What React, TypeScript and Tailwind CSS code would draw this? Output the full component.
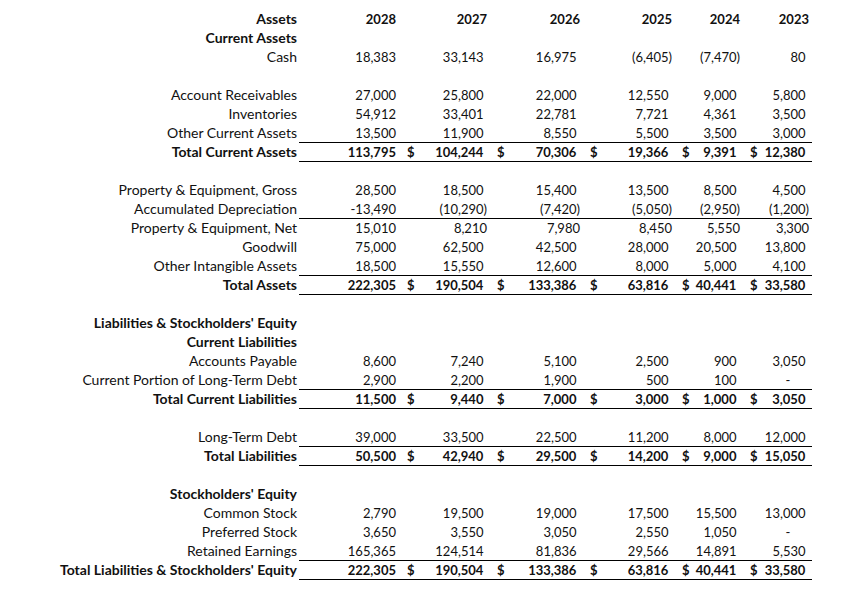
type Row = {
  label?: string;
  bold?: boolean;
  vals?: string[];
  dollar?: boolean;
  line?: boolean;
  general?: boolean;
};

const ROWS: Row[] = [
  { label: "Current Assets", bold: true },
  { label: "Cash", vals: ["18,383", "33,143", "16,975", "(6,405)", "(7,470)", "80"] },
  {},
  { label: "Account Receivables", vals: ["27,000", "25,800", "22,000", "12,550", "9,000", "5,800"] },
  { label: "Inventories", vals: ["54,912", "33,401", "22,781", "7,721", "4,361", "3,500"] },
  { label: "Other Current Assets", vals: ["13,500", "11,900", "8,550", "5,500", "3,500", "3,000"], line: true },
  { label: "Total Current Assets", bold: true, dollar: true, line: true, vals: ["113,795", "104,244", "70,306", "19,366", "9,391", "12,380"] },
  {},
  { label: "Property & Equipment, Gross", vals: ["28,500", "18,500", "15,400", "13,500", "8,500", "4,500"] },
  { label: "Accumulated Depreciation", line: true, vals: ["-13,490", "(10,290)", "(7,420)", "(5,050)", "(2,950)", "(1,200)"] },
  { label: "Property & Equipment, Net", general: true, vals: ["15,010", "8,210", "7,980", "8,450", "5,550", "3,300"] },
  { label: "Goodwill", vals: ["75,000", "62,500", "42,500", "28,000", "20,500", "13,800"] },
  { label: "Other Intangible Assets", line: true, vals: ["18,500", "15,550", "12,600", "8,000", "5,000", "4,100"] },
  { label: "Total Assets", bold: true, dollar: true, line: true, vals: ["222,305", "190,504", "133,386", "63,816", "40,441", "33,580"] },
  {},
  { label: "Liabilities & Stockholders' Equity", bold: true },
  { label: "Current Liabilities", bold: true },
  { label: "Accounts Payable", vals: ["8,600", "7,240", "5,100", "2,500", "900", "3,050"] },
  { label: "Current Portion of Long-Term Debt", line: true, vals: ["2,900", "2,200", "1,900", "500", "100", "-"] },
  { label: "Total Current Liabilities", bold: true, dollar: true, line: true, vals: ["11,500", "9,440", "7,000", "3,000", "1,000", "3,050"] },
  {},
  { label: "Long-Term Debt", line: true, vals: ["39,000", "33,500", "22,500", "11,200", "8,000", "12,000"] },
  { label: "Total Liabilities", bold: true, dollar: true, line: true, vals: ["50,500", "42,940", "29,500", "14,200", "9,000", "15,050"] },
  {},
  { label: "Stockholders' Equity", bold: true },
  { label: "Common Stock", vals: ["2,790", "19,500", "19,000", "17,500", "15,500", "13,000"] },
  { label: "Preferred Stock", vals: ["3,650", "3,550", "3,050", "2,550", "1,050", "-"] },
  { label: "Retained Earnings", line: true, vals: ["165,365", "124,514", "81,836", "29,566", "14,891", "5,530"] },
  { label: "Total Liabilities & Stockholders' Equity", bold: true, dollar: true, line: true, vals: ["222,305", "190,504", "133,386", "63,816", "40,441", "33,580"] },
];

const YEARS = ["2028", "2027", "2026", "2025", "2024", "2023"];
// widths of the year columns after the label column
const COL_W = ["w-[101px]", "w-[90px]", "w-[93px]", "w-[92px]", "w-[68px]", "w-[69px]"];

function Num({ v, general }: { v: string; general?: boolean }) {
  // accounting format: positives leave room for ")", zero shows a dash
  if (general || v.startsWith("(")) return <span>{v}</span>;
  if (v === "-")
    return (
      <span>
        -<span className="invisible">00)</span>
      </span>
    );
  return (
    <span>
      {v}
      <span className="invisible">)</span>
    </span>
  );
}

export default function App() {
  return (
    <div className="min-h-[596px] w-[862px] bg-white pt-[10px] font-[Lato,sans-serif] text-[14px] leading-[18px] text-[#111]">
      <div className="flex h-[19px] font-bold">
        <div className="w-[299px] pr-[2px] text-right">Assets</div>
        {YEARS.map((y, i) => (
          <div key={y} className={`${COL_W[i]} pr-[3px] text-right text-[13px]`}>
            {i === 0 ? <span className="pr-px">{y}</span> : y}
          </div>
        ))}
      </div>
      {ROWS.map((r, idx) => (
        <div key={idx} className={`flex h-[19px] ${r.bold ? "font-bold" : ""}`}>
          <div className="w-[299px] pr-[2px] text-right whitespace-nowrap">{r.label}</div>
          <div className={`flex h-[19px] text-[13px] ${r.line ? "border-b border-black" : ""}`}>
            {YEARS.map((y, i) => (
              <div key={y} className={`${COL_W[i]} flex justify-between pr-[3px]`}>
                <span className="pl-[7px]">{r.dollar && i > 0 ? "$" : ""}</span>
                {r.vals ? (
                  i === 0 ? (
                    <span className="pr-px">{r.vals[i]}</span>
                  ) : (
                    <Num v={r.vals[i]} general={r.general} />
                  )
                ) : null}
              </div>
            ))}
          </div>
        </div>
      ))}
    </div>
  );
}
